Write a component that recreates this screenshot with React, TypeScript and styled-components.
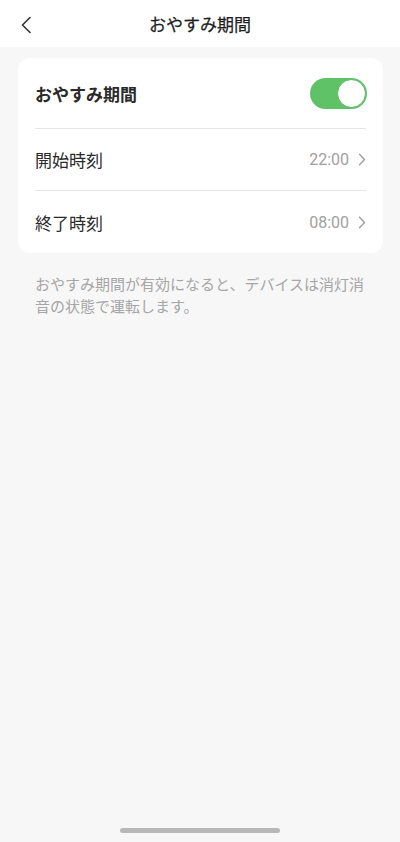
import React, { useState } from "react";
import styled, { createGlobalStyle } from "styled-components";

const Global = createGlobalStyle`
  html, body { margin: 0; padding: 0; }
  body {
    background: #f7f7f7;
    font-family: "Noto Sans CJK JP", "Noto Sans", Roboto, sans-serif;
    -webkit-font-smoothing: antialiased;
  }
`;

const Page = styled.div`
  width: 400px;
  height: 842px;
  background: #f7f7f7;
  display: flex;
  flex-direction: column;
  position: relative;
  overflow: hidden;
`;

const Header = styled.header`
  height: 47px;
  background: #ffffff;
  display: flex;
  align-items: center;
  justify-content: center;
  position: relative;
  flex-shrink: 0;
`;

const BackButton = styled.button`
  position: absolute;
  left: 14px;
  top: 12px;
  width: 24px;
  height: 26px;
  border: none;
  background: none;
  padding: 0;
  display: flex;
  align-items: center;
  justify-content: center;
`;

const Title = styled.h1`
  margin: 0;
  font-size: 17px;
  font-weight: 400;
  color: #1f1f1f;
  line-height: 1;
  -webkit-text-stroke: 0.25px #1f1f1f;
`;

const Card = styled.section`
  margin: 11px 17px 0 18px;
  background: #ffffff;
  border-radius: 12px;
  padding: 0 17px;
`;

const Row = styled.div<{ $h: number; $divider?: boolean }>`
  height: ${(p) => p.$h}px;
  display: flex;
  align-items: center;
  justify-content: space-between;
  border-bottom: ${(p) => (p.$divider ? "1px solid #e6e6e6" : "none")};
  box-sizing: border-box;
`;

const Label = styled.span<{ $bold?: boolean }>`
  font-size: 17px;
  font-weight: ${(p) => (p.$bold ? 700 : 400)};
  color: #2a2a2a;
`;

const Value = styled.span`
  display: flex;
  align-items: center;
  gap: 9px;
  font-family: Roboto, "Noto Sans", sans-serif;
  font-size: 16px;
  color: #a0a0a0;
`;

const Switch = styled.button<{ $on: boolean }>`
  width: 57px;
  height: 31px;
  border-radius: 16px;
  border: none;
  padding: 1px;
  background: ${(p) => (p.$on ? "#5fc267" : "#dddddd")};
  display: flex;
  justify-content: ${(p) => (p.$on ? "flex-end" : "flex-start")};
  align-items: center;
  box-sizing: border-box;
  margin-right: -1px;
`;

const Knob = styled.span`
  width: 29px;
  height: 29px;
  border-radius: 50%;
  background: #ffffff;
  box-sizing: border-box;
  border: 1px solid #58b860;
`;

const Note = styled.p`
  margin: 20px 30px 0 35px;
  font-size: 15px;
  line-height: 22px;
  color: #a6a6a6;
`;

const HomeBar = styled.div`
  position: absolute;
  left: 120px;
  bottom: 9px;
  width: 160px;
  height: 5px;
  border-radius: 3px;
  background: #b8b8b8;
`;

const Chevron = () => (
  <svg width="8" height="13" viewBox="0 0 8 13" fill="none">
    <path d="M1.5 1.2 L6.5 6.5 L1.5 11.8" stroke="#9e9e9e" strokeWidth="1.4" strokeLinecap="round" strokeLinejoin="round" />
  </svg>
);

export default function App() {
  const [on, setOn] = useState(true);
  return (
    <Page>
      <Global />
      <Header>
        <BackButton aria-label="back">
          <svg width="12" height="18" viewBox="0 0 12 18" fill="none">
            <path d="M10 1.5 L2.5 9 L10 16.5" stroke="#333" strokeWidth="1.6" strokeLinecap="round" strokeLinejoin="round" />
          </svg>
        </BackButton>
        <Title>おやすみ期間</Title>
      </Header>
      <Card>
        <Row $h={71} $divider>
          <Label $bold>おやすみ期間</Label>
          <Switch $on={on} onClick={() => setOn(!on)} aria-label="toggle">
            <Knob />
          </Switch>
        </Row>
        <Row $h={62} $divider>
          <Label>開始時刻</Label>
          <Value>
            22:00
            <Chevron />
          </Value>
        </Row>
        <Row $h={62}>
          <Label>終了時刻</Label>
          <Value>
            08:00
            <Chevron />
          </Value>
        </Row>
      </Card>
      <Note>おやすみ期間が有効になると、デバイスは消灯消音の状態で運転します。</Note>
      <HomeBar />
    </Page>
  );
}
